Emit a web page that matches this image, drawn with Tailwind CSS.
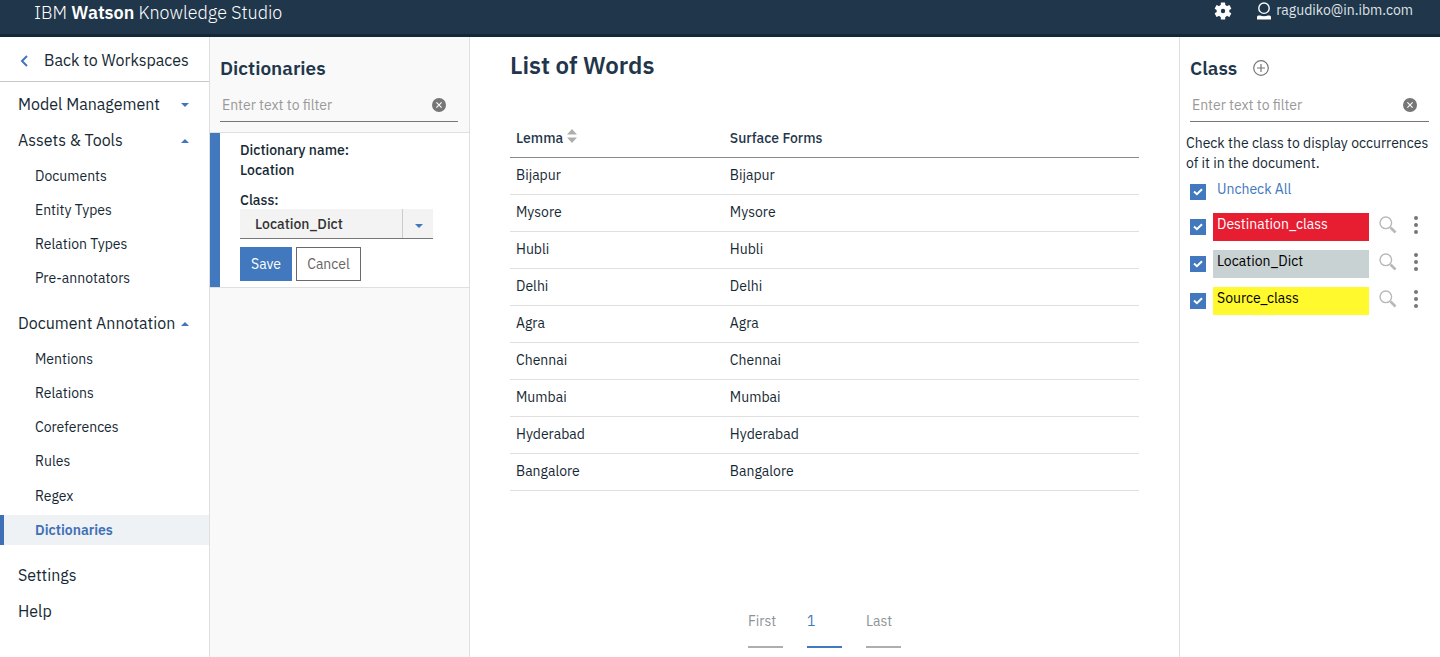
<!DOCTYPE html>
<html lang="en">
<head>
<meta charset="utf-8">
<meta name="viewport" content="width=device-width, initial-scale=1">
<title>IBM Watson Knowledge Studio</title>
<script src="https://cdn.jsdelivr.net/npm/@tailwindcss/browser@4"></script>
</head>
<body class="flex h-screen flex-col overflow-hidden bg-white font-['IBM_Plex_Sans',Roboto,sans-serif] text-sm text-[#152934]">
<svg class="hidden">
  <symbol id="clear" viewBox="0 0 14 14"><circle cx="7" cy="7" r="7" fill="#777677"/><path d="M4.400 4.400l5.200 5.200M9.600 4.400L4.400 9.600" stroke="#f9f9f9" stroke-width="1.200"/></symbol>
  <symbol id="tick" viewBox="0 0 16 16"><path d="M4 7.500l2.900 2.700L12 5.200" fill="none" stroke="#fff" stroke-width="2"/></symbol>
  <symbol id="search" viewBox="0 0 18 18"><circle cx="6.800" cy="6.800" r="5.800" fill="none" stroke="#b8b8b8" stroke-width="1.400"/><path d="M11.500 11.500l5 5" stroke="#b8b8b8" stroke-width="2.600"/></symbol>
  <symbol id="more" viewBox="0 0 4 18"><g fill="#777677"><circle cx="2" cy="2" r="2"/><circle cx="2" cy="9" r="2"/><circle cx="2" cy="16" r="2"/></g></symbol>
  <symbol id="down" viewBox="0 0 8 4"><path d="M0 0h8L4 4z" fill="#3f76bf"/></symbol>
  <symbol id="up" viewBox="0 0 8 4"><path d="M0 4h8L4 0z" fill="#3f76bf"/></symbol>
</svg>

<header class="flex h-[37px] shrink-0 items-center justify-between border-b-3 border-[#152935] bg-[#1f364b] pr-[27px] pb-2 pl-[34px] text-white">
  <h1 class="text-lg font-light">IBM <strong class="font-semibold">Watson</strong> Knowledge Studio</h1>
  <div class="flex items-center gap-6 pb-1">
    <button type="button" aria-label="Settings">
      <svg class="size-[18px]" viewBox="0 0 18 18" fill="#fff"><g><rect x="6.800" y="0.500" width="4.400" height="17" rx="0.600"/><rect x="6.800" y="0.500" width="4.400" height="17" rx="0.600" transform="rotate(60 9 9)"/><rect x="6.800" y="0.500" width="4.400" height="17" rx="0.600" transform="rotate(120 9 9)"/><circle cx="9" cy="9" r="6.400"/></g><circle cx="9" cy="9" r="2.200" fill="#1f364b"/></svg>
    </button>
    <a href="#account" class="flex items-center gap-1 text-[#dfe3e6]">
      <svg class="h-[18px] w-4" viewBox="0 0 16 18"><circle cx="8" cy="6.200" r="5.200" fill="none" stroke="#fff" stroke-width="1.400"/><path d="M1 17.500v-2.500q0-1.500 1.500-1.500h1.500q4 1.500 8 0h1.500q1.500 0 1.500 1.500v2.500z" fill="#fff"/></svg>
      <span class="pb-0.5">ragudiko@in.ibm.com</span>
    </a>
  </div>
</header>

<div class="flex min-h-0 flex-1">
  <nav class="w-[210px] shrink-0 border-r border-[#dfdfdf]">
    <a href="#workspaces" class="flex h-[45px] items-center gap-4 border-b border-[#c8c8c8] pt-0.5 pl-5 text-base">
      <svg class="mt-0.5 h-3 w-2" viewBox="0 0 8 12"><path d="M7 1L2 6l5 5" fill="none" stroke="#3f76bf" stroke-width="2"/></svg>
      Back to Workspaces
    </a>
    <div class="pt-1">
      <button type="button" class="flex h-9 w-full items-center justify-between pr-5 pl-[18px] text-base">Model Management<svg class="mt-0.5 h-1 w-2"><use href="#down"/></svg></button>
      <button type="button" class="flex h-9 w-full items-center justify-between pr-5 pl-[18px] text-base">Assets &amp; Tools<svg class="mt-0.5 h-1 w-2"><use href="#up"/></svg></button>
      <ul class="mt-[3px] grid gap-1">
        <li><a href="#documents" class="flex h-[30px] items-center pl-[35px]">Documents</a></li>
        <li><a href="#entities" class="flex h-[30px] items-center pl-[35px]">Entity Types</a></li>
        <li><a href="#relation-types" class="flex h-[30px] items-center pl-[35px]">Relation Types</a></li>
        <li><a href="#pre-annotators" class="flex h-[30px] items-center pl-[35px]">Pre-annotators</a></li>
      </ul>
      <button type="button" class="mt-3 flex h-9 w-full items-center justify-between pr-5 pl-[18px] text-base">Document Annotation<svg class="mt-0.5 h-1 w-2"><use href="#up"/></svg></button>
      <ul class="mt-[3px] grid gap-1">
        <li><a href="#mentions" class="flex h-[30px] items-center pl-[35px]">Mentions</a></li>
        <li><a href="#relations" class="flex h-[30px] items-center pl-[35px]">Relations</a></li>
        <li><a href="#coreferences" class="flex h-[30px] items-center pl-[35px]">Coreferences</a></li>
        <li><a href="#rules" class="flex h-[30px] items-center pl-[35px]">Rules</a></li>
        <li class="mt-px"><a href="#regex" class="flex h-[30px] items-center pl-[35px]">Regex</a></li>
        <li><a href="#dictionaries" aria-current="page" class="flex h-[30px] items-center border-l-4 border-[#3f70b5] bg-[#eef2f5] pl-[31px] font-semibold text-[#3f70b5]">Dictionaries</a></li>
      </ul>
      <a href="#settings" class="mt-3 flex h-9 items-center pl-[18px] text-base">Settings</a>
      <a href="#help" class="flex h-9 items-center pl-[18px] text-base">Help</a>
    </div>
  </nav>

  <section class="w-[260px] shrink-0 border-r border-[#dfdfdf] bg-[#f9f9f9]">
    <div class="pt-4 pr-[11px] pb-2.5 pl-2.5">
      <h2 class="text-[19px] leading-[30px] font-semibold text-[#1f364b]">Dictionaries</h2>
      <div class="mt-1.5 flex h-[33px] items-center border-b border-[#777677] pr-3 pl-0.5">
        <input type="text" aria-label="Filter dictionaries" placeholder="Enter text to filter" class="min-w-0 flex-1 outline-none placeholder:text-[#999]">
        <button type="button" aria-label="Clear dictionary filter"><svg class="size-3.5"><use href="#clear"/></svg></button>
      </div>
    </div>
    <article class="flex border-y border-[#dfdfdf] bg-white">
      <div class="w-2.5 bg-[#4178be]"></div>
      <div class="flex-1 pt-[7px] pr-9 pb-1.5 pl-5">
        <p class="font-medium">Dictionary name:<br>Location</p>
        <label for="dict-class" class="mt-2.5 block font-medium">Class:</label>
        <div class="relative -mt-px">
          <select id="dict-class" class="block h-[30px] w-full appearance-none border-b border-[#777677] bg-[#f3f3f3] pl-[15px] font-medium text-[#323232]"><option>Location_Dict</option></select>
          <span class="pointer-events-none absolute top-0 right-0 flex h-[29px] w-[31px] items-center justify-center border-l border-[#ccc] pl-0.5"><svg class="mt-1 h-1 w-2"><use href="#down"/></svg></span>
        </div>
        <div class="mt-2 flex gap-1">
          <button type="button" class="h-[34px] w-[52px] bg-[#4178be] text-white">Save</button>
          <button type="button" class="h-[34px] w-[65px] border border-[#6a6a6a] text-[#666]">Cancel</button>
        </div>
      </div>
    </article>
  </section>

  <main class="flex min-w-0 flex-1 flex-col px-10 pt-3">
    <h2 class="text-2xl font-semibold text-[#1f364b]">List of Words</h2>
    <table class="mt-[39px] w-full table-fixed text-left">
      <thead class="border-b border-[#8c8c8c] text-[#1f364b]">
        <tr class="h-[37px]">
          <th class="w-[34%] pl-1.5 font-medium"><button type="button" class="flex items-center gap-1">Lemma<svg class="mb-1 h-3.5 w-2.5" viewBox="0 0 10 14" fill="#aeaeae"><path d="M0 5.500h10L5 0zM0 8.500h10L5 14z"/></svg></button></th>
          <th class="pl-1.5 font-medium">Surface Forms</th>
        </tr>
      </thead>
      <tbody>
        <tr class="h-[37px] border-b border-[#dfdfdf]"><td class="pb-0.5 pl-1.5">Bijapur</td><td class="pb-0.5 pl-1.5">Bijapur</td></tr>
        <tr class="h-[37px] border-b border-[#dfdfdf]"><td class="pb-0.5 pl-1.5">Mysore</td><td class="pb-0.5 pl-1.5">Mysore</td></tr>
        <tr class="h-[37px] border-b border-[#dfdfdf]"><td class="pb-0.5 pl-1.5">Hubli</td><td class="pb-0.5 pl-1.5">Hubli</td></tr>
        <tr class="h-[37px] border-b border-[#dfdfdf]"><td class="pb-0.5 pl-1.5">Delhi</td><td class="pb-0.5 pl-1.5">Delhi</td></tr>
        <tr class="h-[37px] border-b border-[#dfdfdf]"><td class="pb-0.5 pl-1.5">Agra</td><td class="pb-0.5 pl-1.5">Agra</td></tr>
        <tr class="h-[37px] border-b border-[#dfdfdf]"><td class="pb-0.5 pl-1.5">Chennai</td><td class="pb-0.5 pl-1.5">Chennai</td></tr>
        <tr class="h-[37px] border-b border-[#dfdfdf]"><td class="pb-0.5 pl-1.5">Mumbai</td><td class="pb-0.5 pl-1.5">Mumbai</td></tr>
        <tr class="h-[37px] border-b border-[#dfdfdf]"><td class="pb-0.5 pl-1.5">Hyderabad</td><td class="pb-0.5 pl-1.5">Hyderabad</td></tr>
        <tr class="h-[37px] border-b border-[#dfdfdf]"><td class="pb-0.5 pl-1.5">Bangalore</td><td class="pb-0.5 pl-1.5">Bangalore</td></tr>
      </tbody>
    </table>
    <div class="mt-auto flex justify-center gap-6 pb-[9px]">
      <button type="button" class="w-[35px] border-b-2 border-[#aeaeae] pb-[15px] text-left text-[#8c9499]">First</button>
      <button type="button" aria-current="page" class="w-[35px] border-b-2 border-[#4178be] pb-[15px] text-left text-[#4178be]">1</button>
      <button type="button" class="w-[35px] border-b-2 border-[#aeaeae] pb-[15px] text-left text-[#8c9499]">Last</button>
    </div>
  </main>

  <aside class="w-[261px] shrink-0 border-l border-[#dfdfdf]">
    <div class="pt-4 pr-[11px] pl-2.5">
      <div class="flex items-center gap-4">
        <h2 class="text-[19px] leading-[30px] font-semibold text-[#1f364b]">Class</h2>
        <button type="button" aria-label="Add class"><svg class="size-4" viewBox="0 0 16 16" fill="none" stroke="#777677" stroke-width="1.200"><circle cx="8" cy="8" r="7.300"/><path d="M8 4v8M4 8h8"/></svg></button>
      </div>
      <div class="mt-1.5 flex h-[33px] items-center border-b border-[#777677] pr-3 pl-0.5">
        <input type="text" aria-label="Filter classes" placeholder="Enter text to filter" class="min-w-0 flex-1 outline-none placeholder:text-[#999]">
        <button type="button" aria-label="Clear class filter"><svg class="size-3.5"><use href="#clear"/></svg></button>
      </div>
    </div>
    <p class="mt-[11px] pr-1 pl-1.5">Check the class to display occurrences of it in the document.</p>
    <div class="mt-1.5 flex h-[26px] pl-2.5">
      <span class="mt-[5px] grid size-4"><input id="all" type="checkbox" checked class="col-start-1 row-start-1 size-4 appearance-none border border-[#4178be] checked:bg-[#4178be]"><svg class="pointer-events-none col-start-1 row-start-1 size-4"><use href="#tick"/></svg></span>
      <label for="all" class="pl-[11px] text-[#4178be]">Uncheck All</label>
    </div>
    <ul class="mt-2 grid gap-[9px] pr-[22px] pl-2.5">
      <li class="flex h-7">
        <span class="mt-1.5 grid size-4"><input id="dest" type="checkbox" checked class="col-start-1 row-start-1 size-4 appearance-none border border-[#4178be] checked:bg-[#4178be]"><svg class="pointer-events-none col-start-1 row-start-1 size-4"><use href="#tick"/></svg></span>
        <label for="dest" class="ml-[7px] flex-1 bg-[#e71d32] pt-px pl-1 text-white">Destination_class</label>
        <button type="button" aria-label="Find Destination_class" class="ml-2.5 self-start pt-[3px]"><svg class="size-[18px]"><use href="#search"/></svg></button>
        <button type="button" aria-label="Destination_class options" class="ml-[17px] self-start pt-[3px]"><svg class="h-[18px] w-1"><use href="#more"/></svg></button>
      </li>
      <li class="flex h-7">
        <span class="mt-1.5 grid size-4"><input id="loc" type="checkbox" checked class="col-start-1 row-start-1 size-4 appearance-none border border-[#4178be] checked:bg-[#4178be]"><svg class="pointer-events-none col-start-1 row-start-1 size-4"><use href="#tick"/></svg></span>
        <label for="loc" class="ml-[7px] flex-1 bg-[#c8d2d2] pt-px pl-1 text-black">Location_Dict</label>
        <button type="button" aria-label="Find Location_Dict" class="ml-2.5 self-start pt-[3px]"><svg class="size-[18px]"><use href="#search"/></svg></button>
        <button type="button" aria-label="Location_Dict options" class="ml-[17px] self-start pt-[3px]"><svg class="h-[18px] w-1"><use href="#more"/></svg></button>
      </li>
      <li class="flex h-7">
        <span class="mt-1.5 grid size-4"><input id="src" type="checkbox" checked class="col-start-1 row-start-1 size-4 appearance-none border border-[#4178be] checked:bg-[#4178be]"><svg class="pointer-events-none col-start-1 row-start-1 size-4"><use href="#tick"/></svg></span>
        <label for="src" class="ml-[7px] flex-1 bg-[#fff92e] pt-px pl-1 text-black">Source_class</label>
        <button type="button" aria-label="Find Source_class" class="ml-2.5 self-start pt-[3px]"><svg class="size-[18px]"><use href="#search"/></svg></button>
        <button type="button" aria-label="Source_class options" class="ml-[17px] self-start pt-[3px]"><svg class="h-[18px] w-1"><use href="#more"/></svg></button>
      </li>
    </ul>
  </aside>
</div>
</body>
</html>
